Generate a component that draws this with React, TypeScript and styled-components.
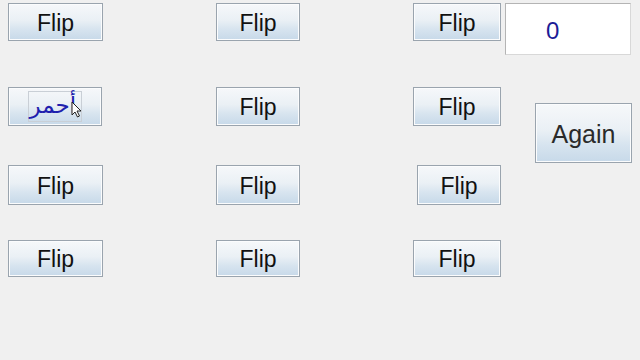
import React from 'react';
import styled, { createGlobalStyle } from 'styled-components';

const GlobalStyle = createGlobalStyle`
	html, body {
		margin: 0;
		padding: 0;
		background: #f0f0f0;
		width: 640px;
		height: 360px;
		overflow: hidden;
	}
	* {
		box-sizing: border-box;
	}
`;

const Window = styled.div`
	display: flex;
	align-items: flex-start;
	width: 640px;
	height: 360px;
	background: #f0f0f0;
	font-family: "Liberation Sans", Arial, sans-serif;
`;

const CardGrid = styled.div`
	display: grid;
	grid-template-columns: 95px 84px 88px;
	grid-template-rows: 84px 78px 75px 37px;
	column-gap: 113px;
	padding: 3px 0 0 8px;
`;

const FlipButton = styled.button<{ $w?: number; $h: number; $end?: boolean }>`
	position: relative;
	justify-self: ${(p) => (p.$end ? 'end' : 'start')};
	align-self: start;
	width: ${(p) => (p.$w ? p.$w + 'px' : '100%')};
	height: ${(p) => p.$h}px;
	padding: 2px 0 0 0;
	border: 1px solid #9aa4ae;
	box-shadow: inset 0 0 0 1px #fbfcfd;
	background: linear-gradient(to bottom, #f6f8fa 0%, #eaf0f5 45%, #d7e4ef 70%, #c7d9e9 100%);
	font-family: "Liberation Sans", Arial, sans-serif;
	font-size: 23px;
	color: #111;
	display: flex;
	align-items: center;
	justify-content: center;
	cursor: default;
`;

const FaceUp = styled.span`
	display: inline-flex;
	align-items: center;
	justify-content: flex-start;
	height: 31px;
	width: 54px;
	padding: 0 0 4px 1px;
	margin: -2px 0 0 -1px;
	border: 1px solid #c9cfd6;
	font-family: "DejaVu Sans", "Noto Sans", sans-serif;
	font-size: 23px;
	color: #1f1fae;
	direction: ltr;
`;

const Pointer = styled.svg`
	position: absolute;
	left: 62px;
	top: 13px;
	width: 11px;
	height: 17px;
`;

const SidePanel = styled.div`
	display: flex;
	flex-direction: column;
	align-items: flex-start;
	padding: 3px 0 0 4px;
`;

const ScoreField = styled.div`
	width: 126px;
	height: 52px;
	background: #fff;
	border: 1px solid #b4b4b4;
	border-right-color: #d8d8d8;
	border-bottom-color: #d8d8d8;
	display: flex;
	align-items: center;
	padding: 4px 0 0 40px;
	font-size: 24px;
	color: #1c1c96;
`;

const AgainButton = styled(FlipButton)`
	margin: 48px 0 0 30px;
	font-size: 25px;
	color: #2a2a2a;
`;

const rows = [
	{ h: 38, cells: [{ w: 95 }, { w: 84 }, { w: 88 }] },
	{ h: 39, cells: [{ w: 94 }, { w: 84 }, { w: 88 }] },
	{ h: 40, cells: [{ w: 95 }, { w: 84 }, { w: 84 }] },
	{ h: 37, cells: [{ w: 95 }, { w: 84 }, { w: 88 }] },
];

const App = () => {
	return (
		<>
			<GlobalStyle />
			<Window>
				<CardGrid>
					{rows.map((row, r) =>
						row.cells.map((cell, c) =>
							r === 1 && c === 0 ? (
								<FlipButton key={`${r}-${c}`} $w={cell.w} $h={row.h}>
									<FaceUp>
										<bdi dir="rtl">أحمر</bdi>
									</FaceUp>
									<Pointer viewBox="0 0 11 17">
										<path d="M1 1 L1 14 L4 11 L6.5 16 L8.5 15 L6 10 L10 10 Z" fill="#fff" stroke="#222" strokeWidth="1" strokeLinejoin="round" />
									</Pointer>
								</FlipButton>
							) : (
								<FlipButton key={`${r}-${c}`} $w={cell.w} $h={row.h} $end={c === 2}>
									Flip
								</FlipButton>
							)
						)
					)}
				</CardGrid>
				<SidePanel>
					<ScoreField>0</ScoreField>
					<AgainButton $w={97} $h={60}>Again</AgainButton>
				</SidePanel>
			</Window>
		</>
	);
};

export default App;
